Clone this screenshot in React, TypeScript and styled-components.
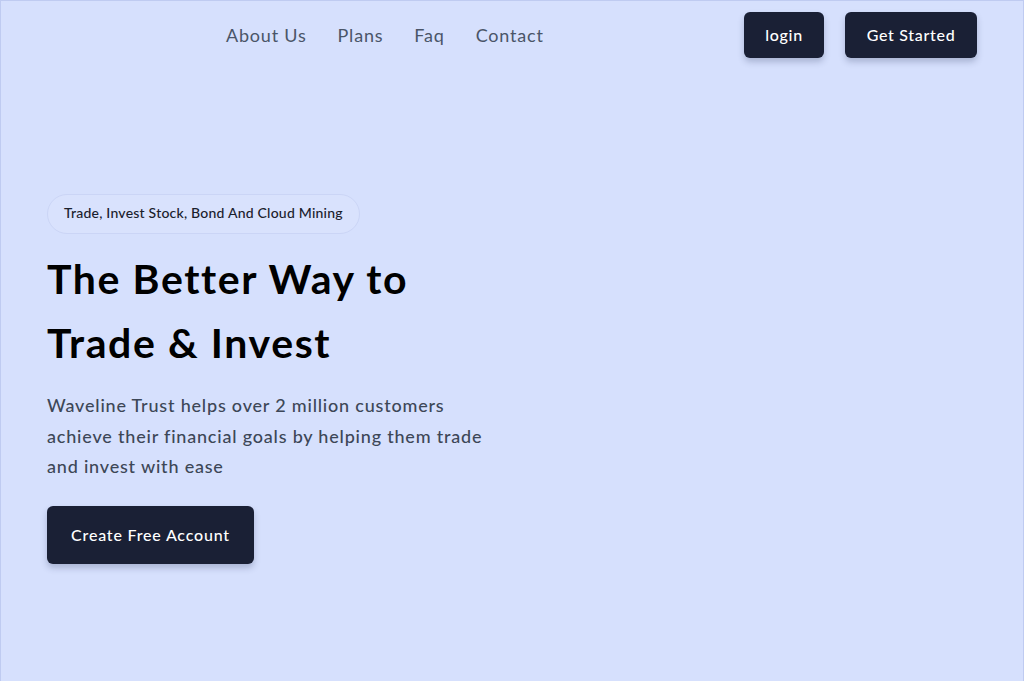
import React from "react";
import styled, { createGlobalStyle } from "styled-components";

const GlobalStyle = createGlobalStyle`
  * {
    box-sizing: border-box;
  }
  html, body {
    margin: 0;
    padding: 0;
  }
  body {
    font-family: "Lato", "Noto Sans", sans-serif;
    background: #d6e0fd;
  }
`;

const links = ["About Us", "Plans", "Faq", "Contact"];

const App = () => {
  return (
    <>
      <GlobalStyle />
      <Page>
        <Header>
          <Nav>
            {links.map((el) => (
              <NavLink key={el}>{el}</NavLink>
            ))}
          </Nav>
          <Actions>
            <DarkButton $w={80}>login</DarkButton>
            <DarkButton $w={132}>Get Started</DarkButton>
          </Actions>
        </Header>
        <Hero>
          <Badge>Trade, Invest Stock, Bond And Cloud Mining</Badge>
          <Title>
            The Better Way to
            <br />
            Trade &amp; Invest
          </Title>
          <Lead>
            Waveline Trust helps over 2 million customers achieve their
            financial goals by helping them trade and invest with ease
          </Lead>
          <BigButton>Create Free Account</BigButton>
        </Hero>
      </Page>
    </>
  );
};

export default App;

const Page = styled.div`
  width: 100%;
  min-height: 100vh;
  background: #d6e0fd;
  border: 1px solid #bfcbf1;
  border-bottom: none;
`;

const Header = styled.div`
  display: flex;
  align-items: center;
  justify-content: space-between;
  padding: 11px 46px 0 225px;
`;

const Nav = styled.nav`
  display: flex;
  align-items: center;
  gap: 31px;
`;

const NavLink = styled.a`
  font-size: 18px;
  color: #4a5568;
  letter-spacing: 0.8px;
  cursor: pointer;
`;

const Actions = styled.div`
  display: flex;
  gap: 21px;
`;

const DarkButton = styled.button<{ $w: number }>`
  width: ${(p) => p.$w}px;
  height: 46px;
  padding: 0 0 2px;
  border: none;
  border-radius: 6px;
  background: #1a2035;
  color: #ffffff;
  font-family: inherit;
  font-size: 16px;
  font-weight: 500;
  letter-spacing: 0.7px;
  box-shadow: 0 4px 6px rgba(40, 50, 90, 0.25);
  cursor: pointer;
`;

const Hero = styled.section`
  display: flex;
  flex-direction: column;
  align-items: flex-start;
  padding: 136px 0 0 46px;
`;

const Badge = styled.div`
  height: 40px;
  display: flex;
  align-items: center;
  padding: 0 16px 3px;
  border-radius: 20px;
  border: 1px solid #cbd5f6;
  background: #d9e2fd;
  color: #1a202c;
  font-size: 14px;
  font-weight: 500;
  letter-spacing: 0.22px;
`;

const Title = styled.h1`
  margin: 13px 0 0;
  font-size: 41px;
  font-weight: 700;
  line-height: 64px;
  letter-spacing: 1.6px;
  color: #000000;
`;

const Lead = styled.p`
  margin: 15px 0 0;
  width: 450px;
  font-size: 18px;
  font-weight: 500;
  line-height: 30.5px;
  letter-spacing: 0.8px;
  color: #3d4757;
`;

const BigButton = styled.button`
  margin-top: 24px;
  width: 207px;
  height: 58px;
  padding: 0;
  border: none;
  border-radius: 6px;
  background: #1a2035;
  color: #ffffff;
  font-family: inherit;
  font-size: 16px;
  font-weight: 500;
  letter-spacing: 0.8px;
  box-shadow: 0 4px 6px rgba(40, 50, 90, 0.25);
  cursor: pointer;
`;
